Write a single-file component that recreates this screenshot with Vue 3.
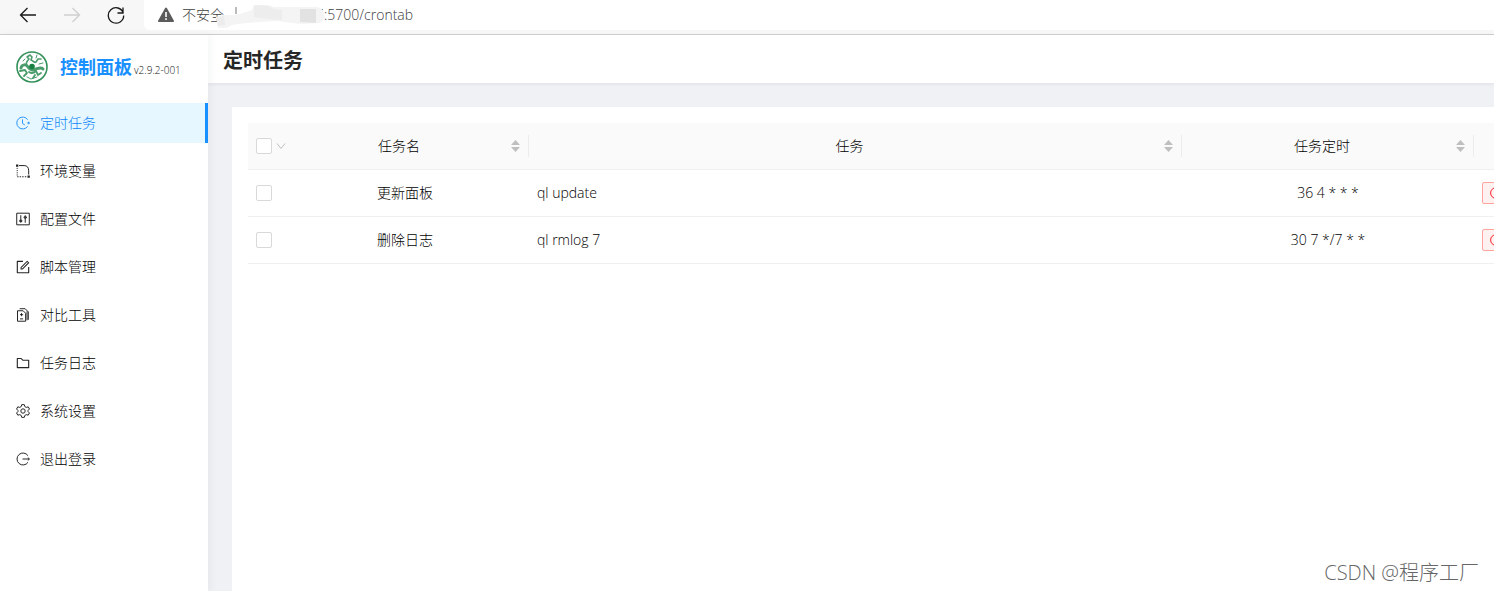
<template>
  <div class="window">
    <header class="browser">
      <button class="nav" aria-label="后退">
        <svg width="18" height="18" viewBox="0 0 18 18"><path d="M17 9H2M8.500 2 1.500 9l7 7" /></svg>
      </button>
      <button class="nav nav-off" aria-label="前进" disabled>
        <svg width="18" height="18" viewBox="0 0 18 18"><path d="M1 9h15M9.500 2l7 7-7 7" /></svg>
      </button>
      <button class="nav" aria-label="刷新">
        <svg width="18" height="18" viewBox="0 0 18 18"><path d="M16.300 7A7.700 7.700 0 1 0 16.700 9.500M16 1.500V7h-5.500" /></svg>
      </button>
      <div class="address">
        <svg class="warn" width="16" height="16" viewBox="0 0 16 16">
          <path d="M7 1.200a1.200 1.200 0 0 1 2 0l6.800 12.400a1 1 0 0 1-1 1.400H1.200a1 1 0 0 1-1-1.400z" fill="#5b5b5b" />
          <path d="M7.200 5h1.600v5H7.200zM7.200 11.300h1.600v1.600H7.200z" fill="#fff" />
        </svg>
        <span class="insecure">不安全</span>
        <svg class="smudge" width="110" height="26" viewBox="0 0 110 26">
          <path d="M20 5v7" stroke="#777" />
          <path d="M106 7v5" stroke="#3a6ea5" stroke-width="2" />
          <path d="M0 15l8-2 10 0 6-1 12-4 2-5 14 0 6 2 24 0 20 0 5 3 2 8-5 5-20 1-22-3-20 1-20 2-6 1-6 3-8 0z" fill="#f4f4f4" />
          <path d="M0 15l8-1 1 9-7 1z" fill="#ececec" />
          <path d="M38 3l14 1 6 3 8 1v10l-14-1-14-2z" fill="#ededee" />
          <path d="M84 7h16v14l-16-1z" fill="#e2e2e3" />
        </svg>
        <input class="url" type="text" aria-label="地址" value=":5700/crontab" />
      </div>
    </header>

    <div class="layout">
      <aside class="sider">
        <div class="brand">
          <svg width="32" height="32" viewBox="0 0 32 32">
            <circle cx="16" cy="16" r="15" fill="#fff" stroke="#34915a" stroke-width="1.600" />
            <g fill="none" stroke="#4a9c6b" stroke-linecap="round" stroke-linejoin="round">
              <path d="M5 17c1-4 5-4 7-1 2 3 5 4 8 2 3-1 5-2 7 0" stroke-width="3" />
              <path d="M11 15c-2-3 0-5 2-7l-2-2 3-2 2 2-1 3c3 1 3 3 5 2l2-3 3 0" stroke-width="1.600" />
              <path d="M4 20l5-1 2 3-3 3M13 21c3 2 5 1 7-1l2 4 3-2M17 27l2-3" stroke-width="1.800" />
              <path d="M20 7l1-3M23 13l4-1M7 10l2-2M11 26l4 2 6-2" stroke-width="1" />
            </g>
            <circle cx="16" cy="15.500" r="2.800" fill="#15803f" />
          </svg>
          <h1>控制面板</h1>
          <span class="version">v2.9.2-001</span>
        </div>
        <nav class="menu">
          <a v-for="item in menu" :key="item.name" href="#" class="menu-item" :class="{ active: item.name === current }" @click.prevent="current = item.name">
            <svg width="14" height="14" viewBox="64 64 896 896">
              <path v-for="d in item.paths" :key="d" :d="d" fill="currentColor" />
              <path v-for="d in item.lines" :key="d" :d="d" fill="none" stroke="currentColor" stroke-width="64" />
            </svg>
            <span>{{ item.name }}</span>
          </a>
        </nav>
      </aside>

      <main class="main">
        <div class="page-header">
          <h2>定时任务</h2>
        </div>
        <section class="panel">
          <table>
            <colgroup>
              <col class="col-check" />
              <col class="col-name" />
              <col />
              <col class="col-schedule" />
              <col class="col-status" />
            </colgroup>
            <thead>
              <tr>
                <th>
                  <div class="select-all">
                    <input type="checkbox" aria-label="全选" />
                    <svg width="10" height="10" viewBox="0 0 10 10"><path d="M1 2.500 5 7.500 9 2.500" fill="none" stroke="#bfbfbf" /></svg>
                  </div>
                </th>
                <th v-for="title in columns" :key="title" class="split">
                  <div class="sorter">
                    <span>{{ title }}</span>
                    <svg width="12" height="14" viewBox="0 0 12 14"><path d="M6.500 1l4.500 5H2zM2 8h9l-4.500 5z" fill="#bfbfbf" /></svg>
                  </div>
                </th>
                <th></th>
              </tr>
            </thead>
            <tbody>
              <tr v-for="task in tasks" :key="task.name">
                <td><input type="checkbox" :aria-label="task.name" /></td>
                <td class="center">{{ task.name }}</td>
                <td>{{ task.command }}</td>
                <td class="center">{{ task.schedule }}</td>
                <td>
                  <span class="tag">
                    <svg width="12" height="12" viewBox="0 0 12 12"><path d="M6 .600a5.400 5.400 0 1 0 0 10.800A5.400 5.400 0 0 0 6 .600zM4 4l4 4M8 4 4 8" fill="none" stroke="#f5222d" /></svg>
                  </span>
                </td>
              </tr>
            </tbody>
          </table>
        </section>
      </main>
    </div>
    <div class="watermark">CSDN @程序工厂</div>
  </div>
</template>

<script setup>
import { ref } from 'vue';

const current = ref('定时任务');

const menu = [
  {
    name: '定时任务',
    lines: ['M810 300A380 380 0 1 0 810 724', 'M480 280V540L630 640', 'M780 510H960M870 430V590'],
  },
  {
    name: '环境变量',
    paths: ['M64 90h150v150H64zM800 800h150v150H800z'],
    lines: ['M260 165H580Q875 165 875 500V740', 'M140 310v70M140 450v70M140 590v70M140 730v70M140 880h90M300 880h90M460 880h90M630 880h90'],
  },
  {
    name: '配置文件',
    lines: ['M110 140H914V884H110z', 'M370 270V750M654 270V750', 'M300 590H440V670H300zM584 370H724V450H584z'],
  },
  {
    name: '脚本管理',
    paths: [
      'M904 512h-56c-4.400 0-8 3.600-8 8v320H184V184h320c4.400 0 8-3.600 8-8v-56c0-4.400-3.600-8-8-8H144c-17.700 0-32 14.300-32 32v736c0 17.700 14.300 32 32 32h736c17.700 0 32-14.300 32-32V520c0-4.400-3.600-8-8-8z',
      'M355.900 534.900L354 653.800c-.1 8.900 7.100 16.200 16 16.200h.4l118-2.900c2-.1 4-.9 5.400-2.300l415.900-415c3.100-3.100 3.100-8.200 0-11.300L785.400 114.300c-1.600-1.600-3.600-2.300-5.700-2.300s-4.100.8-5.700 2.300l-415.800 415a8.300 8.300 0 00-2.300 5.600zm63.500 23.600L779.700 199l45.200 45.100-360.500 359.700-45.700 1.100.7-46.400z',
    ],
  },
  {
    name: '对比工具',
    lines: ['M160 240H520L680 400V910H160z', 'M300 110H650L850 310V820', 'M770 270V850', 'M320 490H520M420 390V590M320 760H520'],
  },
  {
    name: '任务日志',
    paths: [
      'M880 298.400H521L403.700 186.200a8.150 8.150 0 00-5.500-2.200H144c-17.700 0-32 14.300-32 32v592c0 17.700 14.300 32 32 32h736c17.700 0 32-14.300 32-32V330.400c0-17.700-14.300-32-32-32zM840 768H184V256h188.500l119.600 114.400H840V768z',
    ],
  },
  {
    name: '系统设置',
    lines: [
      'M430 105H594L628 228L720 280L845 245L925 385L835 475V549L925 639L845 779L720 744L628 796L594 919H430L396 796L304 744L179 779L99 639L189 549V475L99 385L179 245L304 280L396 228z',
      'M512 372a140 140 0 1 0 0 280a140 140 0 1 0 0-280z',
    ],
  },
  {
    name: '退出登录',
    lines: ['M830 300A382 382 0 1 0 830 724', 'M480 512H920M820 420L920 512L820 604'],
  },
];

const columns = ['任务名', '任务', '任务定时'];

const tasks = [
  { name: '更新面板', command: 'ql update', schedule: '36 4 * * *' },
  { name: '删除日志', command: 'ql rmlog 7', schedule: '30 7 */7 * *' },
];
</script>

<style>
body {
  margin: 0;
}
</style>

<style scoped>
* {
  box-sizing: border-box;
}

.window {
  display: flex;
  flex-direction: column;
  min-height: 100vh;
  position: relative;
  font-family: "Open Sans", "Noto Sans CJK SC", sans-serif;
  font-size: 14px;
  font-weight: 300;
  line-height: 22px;
  color: #000;
}

.browser {
  display: flex;
  height: 35px;
  padding-left: 19px;
  gap: 26px;
  background: #f7f7f7;
  border-bottom: 1px solid #d0d0d0;
}

.nav {
  display: flex;
  align-items: center;
  height: 30px;
  padding: 0;
  border: 0;
  background: none;
}

.nav path {
  fill: none;
  stroke: #1a1a1a;
  stroke-width: 1.3;
}

.nav-off path {
  stroke: #cfcfcf;
}

.address {
  flex: 1;
  display: flex;
  align-items: center;
  height: 30px;
  margin-left: -7px;
  padding-left: 14px;
  background: #fff;
  border-radius: 0 0 0 6px;
  color: #404040;
}

.insecure {
  margin-left: 8px;
}

.smudge {
  margin-left: -8px;
}

.url {
  flex: 1;
  margin-left: -2px;
  padding: 0;
  border: 0;
  outline: 0;
  background: none;
  font: inherit;
  color: inherit;
}

.layout {
  flex: 1;
  display: flex;
}

.sider {
  width: 208px;
  flex-shrink: 0;
  position: relative;
  background: #fff;
  box-shadow: 2px 0 8px rgba(29, 35, 41, 0.05);
}

.brand {
  display: flex;
  align-items: center;
  height: 64px;
  padding-left: 16px;
}

.brand h1 {
  margin: 0 0 0 12px;
  font-size: 18px;
  font-weight: 700;
  color: #1890ff;
}

.version {
  margin: 6px 0 0 2px;
  font-size: 10px;
  color: #111;
}

.menu {
  display: flex;
  flex-direction: column;
  gap: 8px;
  padding-top: 4px;
}

.menu-item {
  display: flex;
  align-items: center;
  gap: 10px;
  height: 40px;
  padding-left: 16px;
  color: #000;
  text-decoration: none;
}

.menu-item svg {
  opacity: 0.85;
}

.menu-item.active {
  color: #0f86fa;
  background: #e6f7ff;
  border-right: 3px solid #1890ff;
}

.main {
  flex: 1;
  min-width: 0;
  display: flex;
  flex-direction: column;
  background: #f0f1f5;
}

.page-header {
  height: 48px;
  padding: 10px 15px 0;
  background: #fff;
  box-shadow: 0 1px 4px rgba(0, 21, 41, 0.08);
}

.page-header h2 {
  margin: 0;
  font-size: 20px;
  font-weight: 700;
  line-height: 32px;
  color: #262626;
}

.panel {
  flex: 1;
  margin: 24px 0 0 24px;
  padding: 16px 0 0 16px;
  background: #fff;
  overflow: hidden;
}

table {
  width: calc(100% + 80px);
  table-layout: fixed;
  border-collapse: separate;
  border-spacing: 0;
}

.col-check {
  width: 33px;
}

.col-name {
  width: 248px;
}

.col-schedule {
  width: 292px;
}

.col-status {
  width: 100px;
}

th,
td {
  height: 47px;
  padding: 0 8px;
  border-bottom: 1px solid #f0f0f0;
  text-align: left;
  font-weight: inherit;
}

th {
  background: #fafafa;
}

.split {
  background: linear-gradient(#ececec, #ececec) right center / 1px 22px no-repeat #fafafa;
}

.center {
  text-align: center;
}

.select-all {
  display: flex;
  align-items: center;
  gap: 4px;
  width: 30px;
}

.sorter {
  display: flex;
  align-items: center;
}

.sorter span {
  flex: 1;
  text-align: center;
}

input[type="checkbox"] {
  appearance: none;
  display: block;
  flex-shrink: 0;
  width: 16px;
  height: 16px;
  margin: 0;
  border: 1px solid #d9d9d9;
  border-radius: 2px;
  background: #fff;
}

.tag {
  display: flex;
  align-items: center;
  width: 70px;
  height: 22px;
  padding-left: 7px;
  border: 1px solid #ffa39e;
  border-radius: 2px;
  background: #fff1f0;
}

.watermark {
  position: absolute;
  right: 15px;
  bottom: 7px;
  font-size: 20px;
  color: #666;
}
</style>
